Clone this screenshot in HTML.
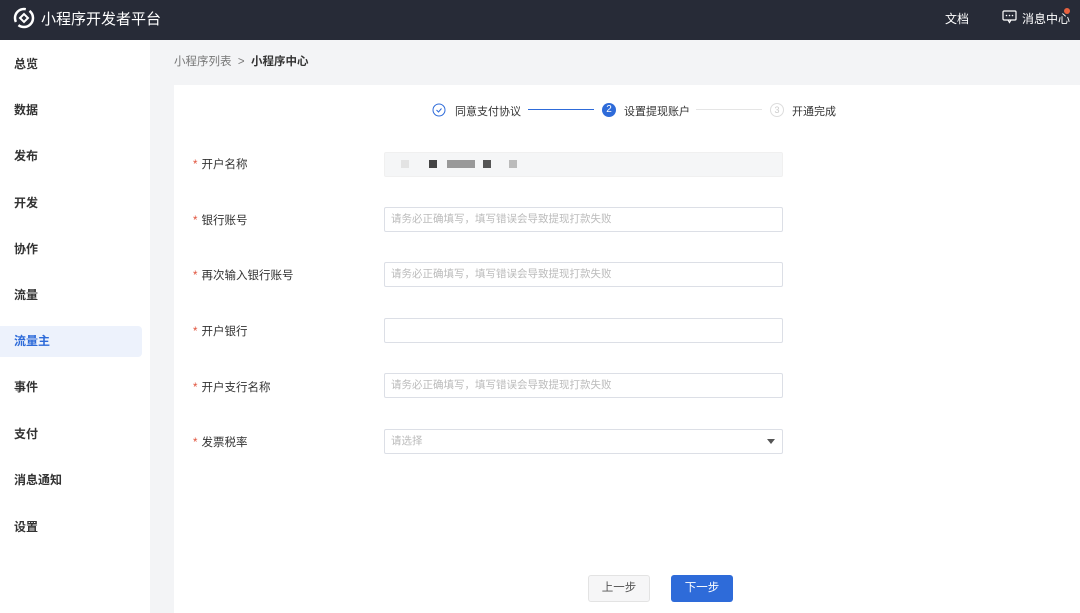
<!DOCTYPE html><html><head><meta charset="utf-8"><style>
*{margin:0;padding:0;box-sizing:border-box}
body{width:1080px;height:613px;overflow:hidden;font-family:"Liberation Sans","Noto Sans CJK SC",sans-serif;background:#f3f4f6;position:relative;font-size:12px;color:#333}
.hd{position:absolute;left:0;top:0;width:1080px;height:40px;background:#272b37;color:#fff}
.side{position:absolute;left:0;top:40px;width:150px;height:573px;background:#fff}
.si{position:absolute;left:0;width:142px;height:31px;line-height:31px;padding-left:14px;font-size:12px;font-weight:bold;color:#333}
.si.a{background:#edf2fc;color:#2e6bd9;border-radius:0 4px 4px 0}
.card{position:absolute;left:174px;top:85px;width:906px;height:528px;background:#fff}
.lb{position:absolute;left:193px;font-size:11.5px;color:#333}
.lb b{color:#e0533c;font-weight:normal;margin-right:4px}
.in{position:absolute;left:384px;width:399px;height:25px;border:1px solid #dcdfe6;border-radius:2px;background:#fff;font-size:10.5px;color:#bbb;line-height:23px;padding-left:6px}
.st{position:absolute;top:103px;font-size:11px}
</style></head><body>
<div class="hd">
<svg style="position:absolute;left:13px;top:7px" width="22" height="22" viewBox="0 0 22 22"><circle cx="11" cy="11" r="9" fill="none" stroke="#fff" stroke-width="2.5" stroke-dasharray="20 4"/><path d="M7 11l4-4 4 4-4 4z" fill="none" stroke="#fff" stroke-width="2"/></svg>
<div style="position:absolute;left:41px;top:8px;font-size:15px">小程序开发者平台</div>
<div style="position:absolute;left:945px;top:10px;font-size:12px">文档</div>
<svg style="position:absolute;left:1002px;top:10px" width="15" height="14" viewBox="0 0 15 14"><rect x="1" y="1" width="13" height="9" rx="1" fill="none" stroke="#fff" stroke-width="1.2"/><path d="M6 10l1.5 2.5L9 10" fill="none" stroke="#fff" stroke-width="1.2"/><circle cx="4.5" cy="5.5" r=".8" fill="#fff"/><circle cx="7.5" cy="5.5" r=".8" fill="#fff"/><circle cx="10.5" cy="5.5" r=".8" fill="#fff"/></svg>
<div style="position:absolute;left:1022px;top:10px;font-size:12px">消息中心</div>
<div style="position:absolute;left:1064px;top:8px;width:6px;height:6px;border-radius:3px;background:#e8613f"></div>
</div>
<div class="side">
<div class="si" style="top:9px">总览</div>
<div class="si" style="top:55px">数据</div>
<div class="si" style="top:101px">发布</div>
<div class="si" style="top:148px">开发</div>
<div class="si" style="top:194px">协作</div>
<div class="si" style="top:240px">流量</div>
<div class="si a" style="top:286px">流量主</div>
<div class="si" style="top:332px">事件</div>
<div class="si" style="top:379px">支付</div>
<div class="si" style="top:425px">消息通知</div>
<div class="si" style="top:472px">设置</div>
</div>
<div style="position:absolute;left:174px;top:53px;font-size:11.5px;color:#777">小程序列表 &nbsp;&gt;&nbsp; <b style="color:#333">小程序中心</b></div>
<div class="card"></div>
<svg style="position:absolute;left:432px;top:103px" width="14" height="14"><circle cx="7" cy="7" r="6" fill="none" stroke="#2e6bd9"/><path d="M4.5 7l2 2 3-3.5" fill="none" stroke="#2e6bd9"/></svg>
<div class="st" style="left:455px">同意支付协议</div>
<div style="position:absolute;left:528px;top:109px;width:66px;height:1px;background:#2e6bd9"></div>
<div style="position:absolute;left:602px;top:103px;width:14px;height:14px;border-radius:7px;background:#2e6bd9;color:#fff;font-size:10px;text-align:center;line-height:14px">2</div>
<div class="st" style="left:624px">设置提现账户</div>
<div style="position:absolute;left:696px;top:109px;width:66px;height:1px;background:#e5e5e5"></div>
<div style="position:absolute;left:770px;top:103px;width:14px;height:14px;border-radius:7px;border:1px solid #ddd;color:#ccc;font-size:9px;text-align:center;line-height:12px">3</div>
<div class="st" style="left:792px">开通完成</div>

<div class="lb" style="top:156px"><b>*</b>开户名称</div>
<div class="in" style="top:152px;background:#f5f6f7;border-color:#f0f0f0"><span style="position:absolute;left:16px;top:7px;width:8px;height:8px;background:#e3e3e3"></span><span style="position:absolute;left:44px;top:7px;width:8px;height:8px;background:#444"></span><span style="position:absolute;left:62px;top:7px;width:28px;height:8px;background:#999"></span><span style="position:absolute;left:98px;top:7px;width:8px;height:8px;background:#555"></span><span style="position:absolute;left:124px;top:7px;width:8px;height:8px;background:#bbb"></span></div>
<div class="lb" style="top:212px"><b>*</b>银行账号</div>
<div class="in" style="top:207px">请务必正确填写，填写错误会导致提现打款失败</div>
<div class="lb" style="top:267px"><b>*</b>再次输入银行账号</div>
<div class="in" style="top:262px">请务必正确填写，填写错误会导致提现打款失败</div>
<div class="lb" style="top:323px"><b>*</b>开户银行</div>
<div class="in" style="top:318px"></div>
<div class="lb" style="top:379px"><b>*</b>开户支行名称</div>
<div class="in" style="top:373px">请务必正确填写，填写错误会导致提现打款失败</div>
<div class="lb" style="top:434px"><b>*</b>发票税率</div>
<div class="in" style="top:429px">请选择<span style="position:absolute;right:7px;top:9px;border:4px solid transparent;border-top:5px solid #555"></span></div>

<div style="position:absolute;left:588px;top:575px;width:62px;height:27px;border:1px solid #e3e3e3;background:#f6f6f7;border-radius:3px;text-align:center;line-height:25px;font-size:11.5px;color:#555">上一步</div>
<div style="position:absolute;left:671px;top:575px;width:62px;height:27px;background:#2e6bd9;border-radius:3px;text-align:center;line-height:27px;font-size:11.5px;color:#fff">下一步</div>
</body></html>
